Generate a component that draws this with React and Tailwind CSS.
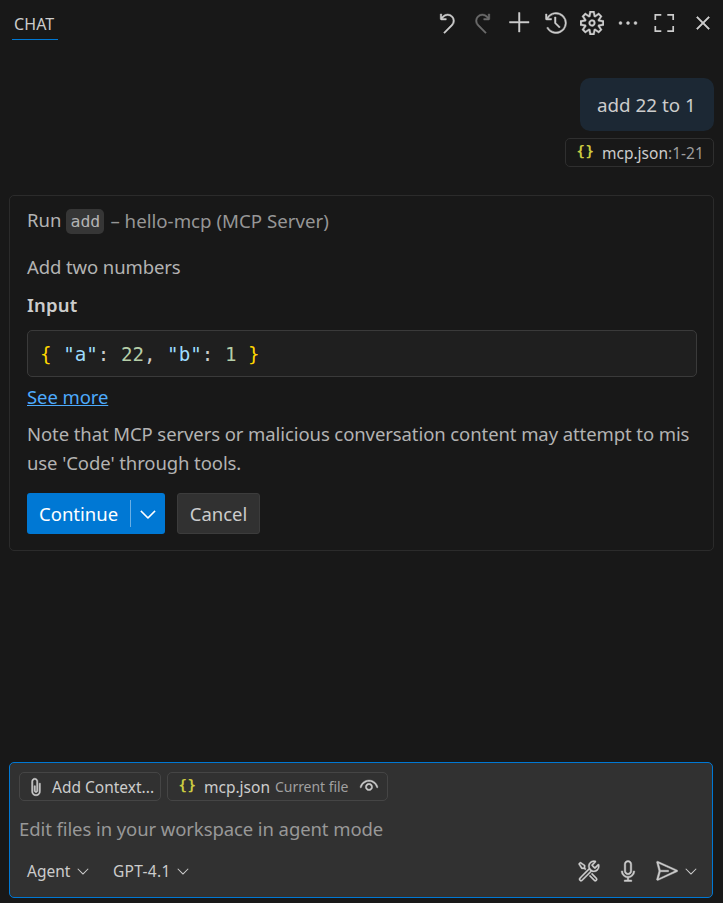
import React from 'react'
import {
  VscAdd,
  VscAttach,
  VscChevronDown,
  VscClose,
  VscDiscard,
  VscEllipsis,
  VscEye,
  VscHistory,
  VscMic,
  VscRedo,
  VscSend,
  VscSettingsGear,
  VscTools,
} from 'react-icons/vsc'

// four open corners, same box as the codicons
function CornersIcon({ size }) {
  return (
    <svg width={size} height={size} viewBox="0 0 24 24" fill="none" stroke="currentColor" strokeWidth="1.7">
      <path d="M3.3 9V3.8H9.3M15.3 3.8H21.2V9M21.2 15V20.2H15.3M9.3 20.2H3.3V15" />
    </svg>
  )
}

const actions = [
  { name: 'Undo', Icon: VscDiscard },
  { name: 'Redo', Icon: VscRedo, disabled: true },
  { name: 'New Chat', Icon: VscAdd },
  { name: 'Show Chats', Icon: VscHistory },
  { name: 'Configure Chat', Icon: VscSettingsGear },
  { name: 'More Actions', Icon: VscEllipsis },
  { name: 'Maximize', Icon: CornersIcon },
]

function JsonIcon() {
  return (
    <span className="flex w-[18px] shrink-0 justify-center gap-[1px] pb-[3px] font-['DejaVu_Sans_Mono',monospace] text-[14px] leading-[18px] font-bold text-[#cbcb41]">
      <span className="w-[8px]">{'{'}</span>
      <span className="w-[8px]">{'}'}</span>
    </span>
  )
}

function Header() {
  return (
    <header className="flex h-[48px] items-start pt-[6px] pr-[8px] pl-3">
      <div className="h-[34px] w-[46px] border-b border-[#0078d4] pl-[2px] text-[16px] leading-[36px] whitespace-nowrap tracking-[0.1px]">
        CHAT
      </div>
      <div className="mt-[5px] ml-auto flex items-center gap-[12.2px]">
        {actions.map(({ name, Icon, disabled }) => (
          <button key={name} aria-label={name} className={disabled ? 'text-[#6b6b6b]' : 'text-[#cccccc]'}>
            <Icon size={24} className={name === 'Maximize' ? '' : 'stroke-current stroke-[0.3]'} />
          </button>
        ))}
        <button aria-label="Close" className="ml-[2.5px]"><VscClose size={24} className="stroke-current stroke-[0.4]" /></button>
      </div>
    </header>
  )
}

function Request() {
  return (
    <div className="mt-[30px] mr-[9px] flex flex-col items-end">
      <div className="h-[53px] w-[134px] rounded-[10px] bg-[#1c2834] pl-[17px] text-[18.8px] leading-[54px] whitespace-nowrap">
        add 22 to 1
      </div>
      <div className="mt-[7px] flex h-[29px] w-[149px] items-center rounded-[5px] border border-[#2f2f2f] pl-[10px]">
        <JsonIcon />
        <span className="ml-2 pt-[2px] text-[15.5px] whitespace-nowrap">
          mcp.json<span className="text-[#9d9d9d]">:1-21</span>
        </span>
      </div>
    </div>
  )
}

function Confirmation() {
  return (
    <section className="mt-7 mr-[9px] ml-[9px] h-[356px] rounded-[5px] border border-[#2b2b2b] pr-4 pl-[17px] text-[18.5px] text-[#b3b3b3]">
      <div className="mt-[9px] flex h-[30px] items-center whitespace-nowrap">
        <span>Run</span>
        <code className="mt-[2px] ml-[5px] h-[25px] w-[38px] rounded-[5px] bg-[#363636] text-center font-['DejaVu_Sans_Mono',monospace] text-[16.5px] leading-[25px]">add</code>
        <span className="mt-[2px] ml-[6px] text-[18.7px] text-[#969696]">– hello-mcp (MCP Server)</span>
      </div>
      <p className="mt-[17px] leading-[30px] tracking-[-0.1px]">Add two numbers</p>
      <h3 className="mt-[8px] leading-[30px] font-semibold tracking-[0.2px] text-[#cccccc]">Input</h3>
      <pre className="mt-[10px] h-[47px] rounded-[5px] border border-[#3a3a3a] bg-[#1f1f1f] pl-3 font-['DejaVu_Sans_Mono',monospace] text-[19.2px] leading-[47px] text-[#cccccc]">
        <span className="text-[#ffd700]">{'{'}</span> <span className="text-[#9cdcfe]">"a"</span>: <span className="text-[#b5cea8]">22</span>, <span className="text-[#9cdcfe]">"b"</span>: <span className="text-[#b5cea8]">1</span> <span className="text-[#ffd700]">{'}'}</span>
      </pre>
      <a className="mt-[5px] block w-fit leading-[29px] tracking-[-0.1px] text-[#4daafc] underline">See more</a>
      <p className="mt-[8px] leading-[29px] tracking-[-0.09px] whitespace-nowrap">
        Note that MCP servers or malicious conversation content may attempt to mis<br />
        use 'Code' through tools.
      </p>
      <div className="mt-[16px] flex h-[41px] gap-3">
        <div className="flex w-[138px] items-center rounded-[3px] bg-[#0078d4] text-white">
          <button className="w-[103px] pl-3 text-left whitespace-nowrap">Continue</button>
          <span className="h-[27px] w-px bg-[#69afe5]" />
          <button aria-label="More" className="ml-[5px]"><VscChevronDown size={24} className="stroke-current stroke-[0.2]" /></button>
        </div>
        <button className="w-[83px] rounded-[3px] border border-[#3c3c3c] bg-[#313131] text-[#cccccc]">Cancel</button>
      </div>
    </section>
  )
}

function ChatInput() {
  return (
    <section className="mt-[211px] mr-[10px] ml-[9px] h-[136px] rounded-[5px] border border-[#0078d4] bg-[#313131] px-[9px] pt-[9px] text-[15.5px] whitespace-nowrap">
      <div className="flex h-[29px] gap-[6px]">
        <button className="flex w-[142px] items-center rounded-[5px] border border-[#454545] pl-[6px]">
          <VscAttach size={20} className="shrink-0 stroke-current stroke-[0.4]" />
          <span className="ml-[6px] pt-[2px]">Add Context...</span>
        </button>
        <div className="flex w-[221px] items-center rounded-[5px] border border-[#454545] pl-[10px]">
          <JsonIcon />
          <span className="ml-2 pt-[2px]">mcp.json</span>
          <span className="ml-[5px] text-[14px] tracking-[-0.05px] text-[#a0a0a0]">Current file</span>
          <VscEye size={22} className="mr-[7px] mb-[2px] ml-auto shrink-0 stroke-current stroke-[0.3]" />
        </div>
      </div>
      <div className="mt-[13px] text-[18.5px] leading-[29px] tracking-[-0.09px] text-[#989898]">Edit files in your workspace in agent mode</div>
      <div className="mt-[14px] flex h-[28px] items-center pl-2">
        <button className="flex w-[86px] items-center"><span className="pt-px">Agent</span><VscChevronDown size={18} className="ml-[4px]" /></button>
        <button className="flex items-center"><span className="pt-px tracking-[0.3px]">GPT-4.1</span><VscChevronDown size={18} className="ml-[3px]" /></button>
        <div className="ml-auto flex items-center">
          <VscTools size={24} className="stroke-current stroke-[0.2]" />
          <VscMic size={24} className="ml-[15px] stroke-current stroke-[0.3]" />
          <VscSend size={24} className="ml-[15px] stroke-current stroke-[0.3]" />
          <VscChevronDown size={18} className="mr-[3px] ml-[3px]" />
        </div>
      </div>
    </section>
  )
}

export default function App() {
  return (
    <main className="h-[903px] w-[723px] overflow-hidden bg-[#181818] font-['Noto_Sans',sans-serif] text-[#cccccc]">
      <Header />
      <Request />
      <Confirmation />
      <ChatInput />
    </main>
  )
}
